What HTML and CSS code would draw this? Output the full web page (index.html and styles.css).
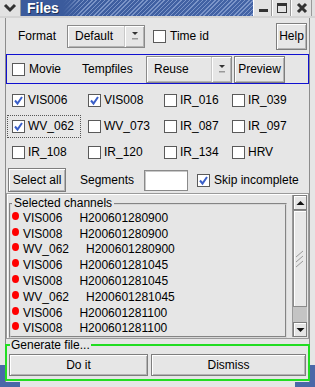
FILE: index.html
```html
<!DOCTYPE html>
<html>
<head>
<meta charset="utf-8">
<link rel="stylesheet" href="styles.css">
</head>
<body>
<div class="win">
  <div class="titlebar">
    <div class="tb-menu"><svg width="14" height="10" viewBox="0 0 14 10"><polyline points="2,2 7,7 12,2" fill="none" stroke="#333" stroke-width="3"/></svg></div>
    <div class="tb-title"><span class="tb-text">Files</span></div>
    <div class="tb-btn"><svg width="12" height="12" viewBox="0 0 12 12"><rect x="2" y="7" width="9" height="3" fill="#333"/></svg></div>
    <div class="tb-btn"><svg width="12" height="12" viewBox="0 0 12 12"><rect x="1.5" y="1.5" width="9" height="9" fill="none" stroke="#333"/><rect x="1" y="1" width="10" height="3" fill="#333"/></svg></div>
    <div class="tb-btn tb-close"><svg width="12" height="12" viewBox="0 0 12 12"><path d="M2 2 L10 10 M10 2 L2 10" stroke="#333" stroke-width="3"/></svg></div>
  </div>
  <div class="client">
    <div class="row1">
      <span class="lbl fmt">Format</span>
      <div class="mb mb-default"><span class="mb-text">Default</span><span class="mb-arrow"><svg width="8" height="10" viewBox="0 0 8 10"><path d="M1 1 H7 L4 4 Z" fill="#333"/><rect x="1" y="7" width="6" height="1.5" fill="#999"/></svg></span></div>
      <label class="chk timeid"><span class="cb"></span><span>Time id</span></label>
      <button class="btn help">Help</button>
    </div>
    <div class="movie">
      <label class="chk movie-chk"><span class="cb"></span><span>Movie</span></label>
      <span class="lbl temp">Tempfiles</span>
      <div class="mb mb-reuse"><span class="mb-text">Reuse</span><span class="mb-arrow"><svg width="8" height="10" viewBox="0 0 8 10"><path d="M1 1 H7 L4 4 Z" fill="#333"/><rect x="1" y="7" width="6" height="1.5" fill="#999"/></svg></span></div>
      <button class="btn preview">Preview</button>
    </div>
    <div class="grid">
      <label class="cell"><span class="cb on"><svg width="11" height="11" viewBox="0 0 11 11"><path d="M2 5.5 L4.5 8.5 L9 2" fill="none" stroke="#3a5fc8" stroke-width="2"/></svg></span><span>VIS006</span></label>
      <label class="cell"><span class="cb on"><svg width="11" height="11" viewBox="0 0 11 11"><path d="M2 5.5 L4.5 8.5 L9 2" fill="none" stroke="#3a5fc8" stroke-width="2"/></svg></span><span>VIS008</span></label>
      <label class="cell"><span class="cb"></span><span>IR_016</span></label>
      <label class="cell"><span class="cb"></span><span>IR_039</span></label>
      <label class="cell focus"><span class="cb on"><svg width="11" height="11" viewBox="0 0 11 11"><path d="M2 5.5 L4.5 8.5 L9 2" fill="none" stroke="#3a5fc8" stroke-width="2"/></svg></span><span>WV_062</span></label>
      <label class="cell"><span class="cb"></span><span>WV_073</span></label>
      <label class="cell"><span class="cb"></span><span>IR_087</span></label>
      <label class="cell"><span class="cb"></span><span>IR_097</span></label>
      <label class="cell"><span class="cb"></span><span>IR_108</span></label>
      <label class="cell"><span class="cb"></span><span>IR_120</span></label>
      <label class="cell"><span class="cb"></span><span>IR_134</span></label>
      <label class="cell"><span class="cb"></span><span>HRV</span></label>
    </div>
    <div class="row-sel">
      <button class="btn selall">Select all</button>
      <span class="lbl seg">Segments</span>
      <span class="entry"></span>
      <label class="chk skip"><span class="cb on"><svg width="11" height="11" viewBox="0 0 11 11"><path d="M2 5.5 L4.5 8.5 L9 2" fill="none" stroke="#3a5fc8" stroke-width="2"/></svg></span><span>Skip incomplete</span></label>
    </div>
    <div class="listbox">
      <fieldset class="selframe">
        <legend>Selected channels</legend>
        <div class="item"><span class="dot"></span><span class="nm">VIS006</span><span>H200601280900</span></div>
        <div class="item"><span class="dot"></span><span class="nm">VIS008</span><span>H200601280900</span></div>
        <div class="item"><span class="dot"></span><span class="nm">WV_062</span><span>H200601280900</span></div>
        <div class="item"><span class="dot"></span><span class="nm">VIS006</span><span>H200601281045</span></div>
        <div class="item"><span class="dot"></span><span class="nm">VIS008</span><span>H200601281045</span></div>
        <div class="item"><span class="dot"></span><span class="nm">WV_062</span><span>H200601281045</span></div>
        <div class="item"><span class="dot"></span><span class="nm">VIS006</span><span>H200601281100</span></div>
        <div class="item"><span class="dot"></span><span class="nm">VIS008</span><span>H200601281100</span></div>
      </fieldset>
      <div class="sb">
        <div class="sb-arrow"><svg width="9" height="6" viewBox="0 0 9 6"><path d="M0.5 5 L4.5 1 L8.5 5 Z" fill="#111"/></svg></div>
        <div class="sb-slider"><svg width="10" height="18" viewBox="0 0 10 18"><path d="M1 7 L8 1 M1 12 L8 6 M1 17 L8 11" stroke="#999" stroke-width="1"/></svg></div>
        <div class="sb-trough"></div>
        <div class="sb-arrow"><svg width="9" height="6" viewBox="0 0 9 6"><path d="M0.5 1 L4.5 5 L8.5 1 Z" fill="#111"/></svg></div>
      </div>
    </div>
    <fieldset class="gen">
      <legend>Generate file...</legend>
      <div class="gen-row">
        <button class="btn doit">Do it</button>
        <button class="btn dismiss">Dismiss</button>
      </div>
    </fieldset>
  </div>
  <div class="corner corner-l"></div>
  <div class="corner corner-r"></div>
</div>
</body>
</html>
```

FILE: styles.css
```css
* { box-sizing: border-box; }
html, body { margin: 0; padding: 0; background: #a9c6e8; }
body { font: 12px "Liberation Sans", Arial, sans-serif; color: #000; }

.win {
  width: 315px;
  height: 387px;
  background: #e6e6e6;
  position: relative;
  overflow: hidden;
  display: flex;
  flex-direction: column;
}

/* title bar */
.titlebar {
  height: 18px;
  display: flex;
  border-bottom: 2px solid #d4d4d4;
  background: #e0e0e0;
}
.tb-menu {
  width: 21px;
  height: 16px;
  display: flex;
  align-items: center;
  justify-content: center;
  background: #e2e2e2;
  border-right: 1px solid #9a9a9a;
}
.tb-title {
  flex: 1;
  height: 16px;
  background:
    repeating-linear-gradient(135deg, rgba(255,255,255,0) 0 2px, rgba(170,190,230,0.55) 2px 3px),
    linear-gradient(90deg, #3b5b9c 0, #4464a6 100%);
  position: relative;
  padding-left: 6px;
}
.tb-title::before {
  content: "";
  position: absolute;
  left: 0; top: 0; bottom: 0;
  width: 60px;
  background: linear-gradient(90deg, #3b5b9c 0, #3b5b9c 70%, rgba(59,91,156,0) 100%);
}
.tb-text {
  position: relative;
  color: #fff;
  font-weight: bold;
  font-size: 14px;
  line-height: 16px;
  text-shadow: 1px 1px 0 #1e2f55;
}
.tb-btn {
  width: 19px;
  height: 16px;
  background: #e2e2e2;
  border-left: 1px solid #fff;
  border-right: 1px solid #9a9a9a;
  display: flex;
  align-items: center;
  justify-content: center;
}
.tb-close { width: 21px; margin-right: 3px; }

/* client area */
.client {
  flex: 1;
  margin: 0 5px;
  border-left: 1px solid #8c8c8c;
  border-right: 1px solid #8c8c8c;
  display: flex;
  flex-direction: column;
}

.lbl { white-space: nowrap; }

.chk { display: flex; align-items: center; white-space: nowrap; }
.cb {
  width: 13px;
  height: 13px;
  border: 1px solid #5a5a5a;
  background: #fff;
  display: inline-flex;
  align-items: center;
  justify-content: center;
  flex: none;
  margin-right: 4px;
}

.btn {
  font: inherit;
  color: #000;
  background: #e6e6e6;
  border: 1px solid #7e7e7e;
  box-shadow: inset 1px 1px 0 #fff, inset -1px -1px 0 #b4b4b4;
  padding: 0;
  margin: 0;
}

.mb {
  display: flex;
  border: 1px solid #8a8a8a;
  box-shadow: inset 1px 1px 0 #fff, inset -1px -1px 0 #b4b4b4;
  background: #e6e6e6;
}
.mb-text { flex: 1; display: flex; align-items: center; padding-left: 7px; }
.mb-arrow {
  width: 20px;
  display: flex;
  align-items: center;
  justify-content: center;
  border-left: 1px solid #c8c8c8;
  box-shadow: inset 1px 0 0 #fff;
}

/* row 1 */
.row1 {
  margin-top: 4px;
  height: 28px;
  display: flex;
  align-items: center;
}
.fmt { margin-left: 12px; width: 49px; }
.mb-default { width: 78px; height: 23px; }
.timeid { margin-left: 8px; }
.timeid .cb { margin-right: 4px; }
.help { margin-left: auto; margin-right: 2px; width: 31px; height: 27px; }

/* movie frame */
.movie {
  margin-top: 4px;
  height: 30px;
  border: 1px solid #1010d0;
  display: flex;
  align-items: center;
}
.movie-chk { margin-left: 5px; width: 70px; }
.temp { margin-left: 0; width: 64px; }
.mb-reuse { width: 86px; height: 27px; }
.preview { margin-left: 2px; width: 51px; height: 27px; }

/* grid */
.grid {
  display: grid;
  grid-template-columns: 76px 76px 68px 1fr;
  grid-auto-rows: 26px;
  padding-left: 1px;
  margin-top: 3px;
}
.cell {
  display: flex;
  align-items: center;
  padding-left: 4px;
  border: 1px dotted transparent;
  height: 23px;
  align-self: center;
  white-space: nowrap;
}
.cell .cb { margin-right: 3px; }
.cell.focus { border-color: #555; width: 74px; }

/* select row */
.row-sel {
  margin-top: 3px;
  height: 24px;
  display: flex;
  align-items: center;
}
.selall { margin-left: 2px; width: 58px; height: 24px; }
.seg { margin-left: 14px; width: 64px; }
.entry {
  width: 44px;
  height: 21px;
  background: #fff;
  border: 1px solid #8a8a8a;
  box-shadow: inset 1px 1px 0 #c8c8c8;
}
.skip { margin-left: 9px; }

/* listbox */
.listbox {
  margin-top: 1px;
  height: 146px;
  display: flex;
  border: 1px solid #9a9a9a;
  box-shadow: inset 1px 1px 0 #fff;
}
.selframe {
  flex: 1;
  margin: 3px 5px 0 2px;
  padding: 0;
  border: 2px groove #d8d8d8;
  min-width: 0;
}
.selframe legend {
  padding: 0 2px;
  margin-left: 1px;
  line-height: 13px;
}
.item {
  height: 15.8px;
  display: flex;
  align-items: center;
  white-space: nowrap;
}
.dot {
  width: 7px;
  height: 8px;
  border-radius: 50%;
  background: #ff0000;
  margin-left: 1px;
  margin-right: 4px;
  margin-top: -4px;
}
.nm { margin-right: 17px; }

.sb {
  width: 15px;
  margin: 1px 1px 1px 0;
  display: flex;
  flex-direction: column;
  border-left: 1px solid #9a9a9a;
}
.sb-arrow {
  height: 15px;
  display: flex;
  align-items: center;
  justify-content: center;
  background: #e6e6e6;
  border: 1px solid #7e7e7e;
  box-shadow: inset 1px 1px 0 #fff;
}
.sb-slider {
  height: 97px;
  background: #e8e8e8;
  border: 1px solid #8a8a8a;
  box-shadow: inset 1px 1px 0 #fff;
  display: flex;
  align-items: center;
  justify-content: center;
}
.sb-trough { flex: 1; background: #c4c4c4; }

/* generate frame */
.gen {
  margin: 0 -1px 0 -1px;
  padding: 3px 2px 3px 2px;
  border: 2px solid #22dd22;
  min-width: 0;
}
.gen legend {
  padding: 0 1px;
  margin-left: 1px;
  line-height: 12px;
}
.gen-row { display: flex; gap: 3px; }
.doit { width: 139px; height: 22px; }
.dismiss { flex: 1; height: 22px; }

.corner {
  position: absolute;
  bottom: 0;
  width: 20px;
  height: 22px;
  border-bottom: 5px solid #4a68a8;
}
.corner-l { left: 0; border-left: 5px solid #4a68a8; }
.corner-r { right: 0; border-right: 5px solid #4a68a8; }
```
